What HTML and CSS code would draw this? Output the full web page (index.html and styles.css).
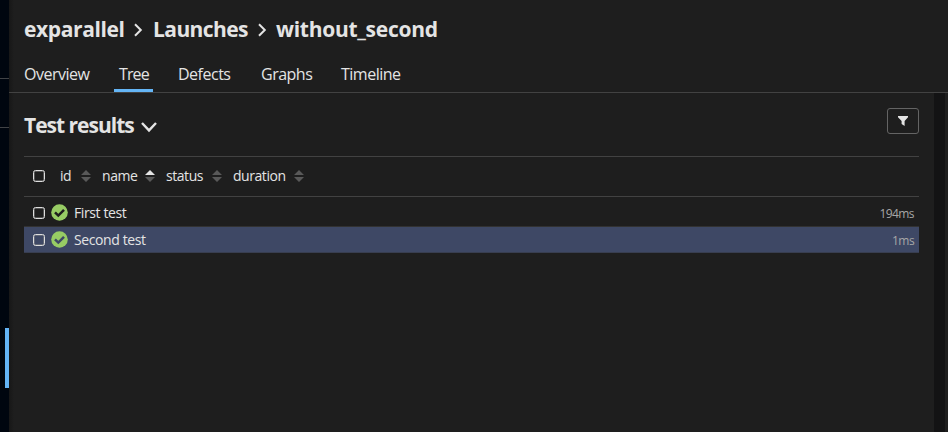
FILE: index.html
```
<!DOCTYPE html>
<html lang="en">
<head>
<meta charset="utf-8">
<title>Test results</title>
<link rel="stylesheet" href="styles.css">
</head>
<body>
<div class="app">
  <aside class="side"><i class="rule"></i><i class="rule second"></i><i class="marker"></i></aside>
  <main class="main">
    <header class="header">
      <h1 class="crumbs">
        <span class="c1">exparallel</span>
        <svg class="sep" viewBox="0 0 10 14"><path d="M2 1.2 7.8 7 2 12.8"/></svg>
        <span class="c2">Launches</span>
        <svg class="sep" viewBox="0 0 10 14"><path d="M2 1.2 7.8 7 2 12.8"/></svg>
        <span class="c3">without_second</span>
      </h1>
      <nav class="tabs">
        <a class="t1">Overview</a><a class="t2 active">Tree</a><a class="t3">Defects</a><a class="t4">Graphs</a><a class="t5">Timeline</a>
      </nav>
    </header>
    <div class="body">
      <section class="content">
        <div class="title">
          <h2>Test results</h2>
          <svg class="chev" viewBox="0 0 18 12"><path d="M2 2 9 9.4 16 2"/></svg>
          <button class="filter"><svg viewBox="0 0 10 10"><path d="M0 0h10v1.2L6.6 5v5L3.6 8V5L0 1.2z"/></svg></button>
        </div>
        <div class="sorter">
          <i class="box"></i>
          <span class="s1">id</span><svg class="sort" viewBox="0 0 10 12"><path d="M5 0l5 5H0zM0 7h10l-5 5z"/></svg>
          <span class="s2">name</span><svg class="sort" viewBox="0 0 10 12"><path class="on" d="M5 0l5 5H0z"/><path d="M0 7h10l-5 5z"/></svg>
          <span class="s3">status</span><svg class="sort" viewBox="0 0 10 12"><path d="M5 0l5 5H0zM0 7h10l-5 5z"/></svg>
          <span class="s4">duration</span><svg class="sort" viewBox="0 0 10 12"><path d="M5 0l5 5H0zM0 7h10l-5 5z"/></svg>
        </div>
        <div class="row">
          <i class="box"></i>
          <svg class="ok" viewBox="0 0 17 17"><circle cx="8.5" cy="8.5" r="8.3"/><path d="M4 8.3 7.3 11.6 13 5.9"/></svg>
          <span class="r1">First test</span><span class="time d1">194ms</span>
        </div>
        <div class="row selected">
          <i class="box"></i>
          <svg class="ok" viewBox="0 0 17 17"><circle cx="8.5" cy="8.5" r="8.3"/><path d="M4 8.3 7.3 11.6 13 5.9"/></svg>
          <span class="r2">Second test</span><span class="time d2">1ms</span>
        </div>
      </section>
      <div class="gutter"></div>
    </div>
  </main>
</div>
</body>
</html>
```
FILE: styles.css
```
* { box-sizing: border-box; }
body { margin: 0; background: #1e1e1e; color: #e4e4e4; font-family: "Segoe UI", "Open Sans", "Noto Sans", sans-serif; overflow: hidden; }
.app { display: flex; width: 948px; height: 432px; }
.side { width: 9px; background: #00060f; display: flex; flex-direction: column; }
.rule { height: 1px; margin-top: 78px; background: #414346; }
.second { margin-top: 48px; }
.marker { width: 4px; height: 60px; margin: 200px 0 0 5px; background: #64b5f6; }
.main { flex: 1; display: flex; flex-direction: column; background: linear-gradient(90deg, #171717, #1e1e1e 5px); }
.header { height: 93px; border-bottom: 1px solid #424242; padding: 15px 0 0 15px; }
h1, h2 { margin: 0; font-weight: 700; white-space: nowrap; }
.crumbs { display: flex; align-items: center; height: 29px; font-size: 21px; line-height: 29px; }
.c1 { width: 109px; letter-spacing: -.38px; }
.c2 { width: 104px; letter-spacing: -.58px; }
.c3 { letter-spacing: -.28px; margin-left: -1px; }
.sep { width: 10px; height: 14px; margin-right: 10px; fill: none; stroke: #e4e4e4; stroke-width: 2; }
.tabs { display: flex; height: 48px; font-size: 16px; line-height: 22px; margin-left: -5px; gap: 20px; }
.tabs a { padding: 19px 5px 0; height: 48px; white-space: nowrap; border-bottom: 3px solid transparent; letter-spacing: -.5px; }
.tabs .active { border-color: #64b5f6; letter-spacing: -.9px; }
.t1 { width: 75px; } .t2 { width: 39px; } .t3 { width: 63px; } .t4 { width: 60px; } .t5 { width: 72px; }
.body { flex: 1; display: flex; }
.content { width: 895px; margin: 0 15px; font-size: 14px; }
.title { display: flex; height: 63px; padding-top: 15px; }
h2 { width: 116px; font-size: 21px; line-height: 34px; letter-spacing: -1px; }
.chev { width: 18px; height: 12px; margin-top: 13px; fill: none; stroke: #e4e4e4; stroke-width: 2.4; }
.filter { width: 32px; height: 26px; margin-left: auto; padding: 0; border: 1px solid #646464; border-radius: 3px; background: none; display: flex; align-items: center; justify-content: center; }
.filter svg { width: 10px; height: 10px; fill: #e4e4e4; }
.sorter { display: flex; align-items: center; height: 41px; border-top: 1px solid #424242; border-bottom: 1px solid #424242; padding: 0 0 1px 9px; line-height: 20px; }
.box { width: 12px; height: 12px; border: 1px solid #dedede; border-radius: 2.5px; box-shadow: inset 0 0 0 .5px #8a8a8a; flex: none; }
.sorter .box { margin-right: 15px; }
.sorter span { letter-spacing: -.45px; }
.s1 { width: 21px; } .s2 { width: 43px; } .s3 { width: 46px; } .s4 { width: 61px; }
.sort { width: 10px; height: 12px; fill: #595959; margin-right: 11px; }
.sort .on { fill: #e4e4e4; }
.row { display: flex; align-items: center; height: 27px; padding: 0 5px 0 9px; line-height: 20px; }
.sorter + .row { margin-top: 2px; }
.selected { background: #3e4865; border-top: 1px solid #323232; border-bottom: 1px solid #383e50; }
.ok { width: 17px; height: 17px; margin: 0 6px; fill: #97cc64; }
.ok path { fill: none; stroke: #1e1e1e; stroke-width: 2.5; }
.selected .ok path { stroke: #3e4865; }
.row span { letter-spacing: -.4px; }
.row .time { margin-left: auto; font-size: 12px; color: #a7a7a7; padding-top: 2px; letter-spacing: -.6px; }
.gutter { width: 11px; background: #131314; }
```
